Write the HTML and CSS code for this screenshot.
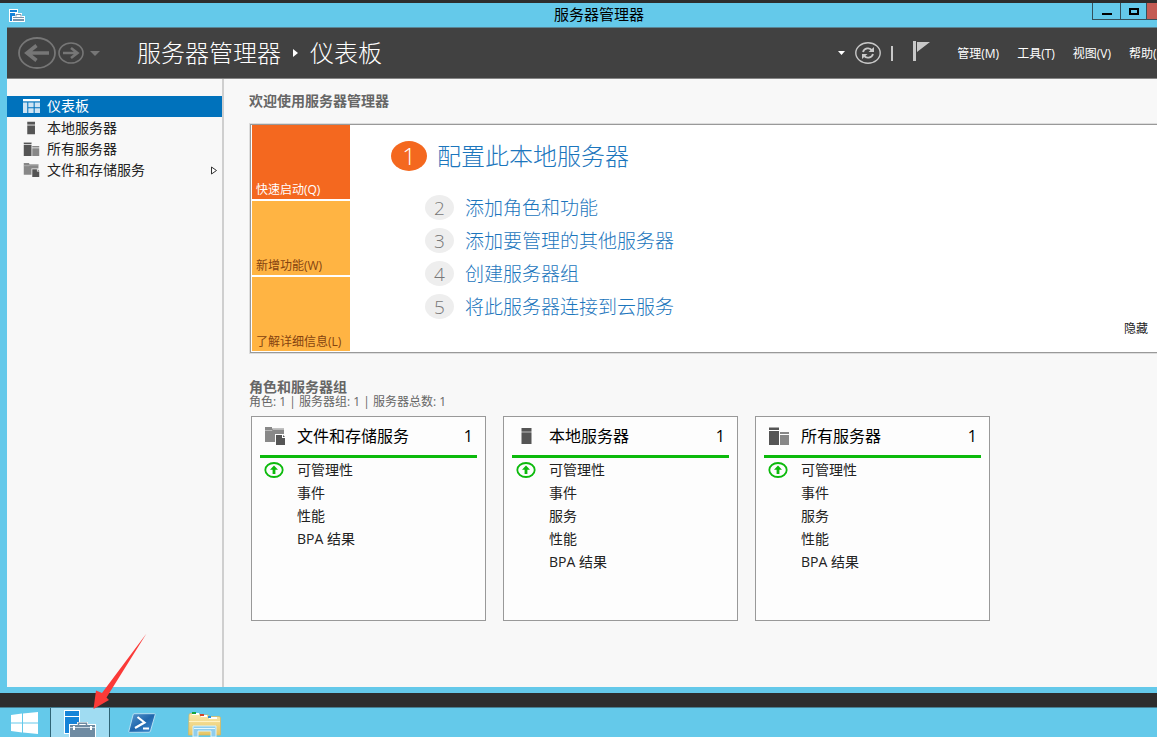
FILE: index.html
```html
<!DOCTYPE html>
<html lang="zh-CN">
<head>
<meta charset="utf-8">
<title>服务器管理器</title>
<link rel="stylesheet" href="styles.css">
</head>
<body>
<svg class="defs" aria-hidden="true">
  <symbol id="i-server" viewBox="0 0 22 18" preserveAspectRatio="none">
    <path fill="#555" d="M5.500 1h10v3h-10zM5.500 6h10v11h-10z"/><path fill="#888" d="M5.500 4h10v2h-10z"/>
  </symbol>
  <symbol id="i-servers" viewBox="0 0 22 18" preserveAspectRatio="none">
    <path fill="#555" d="M1 1h10v2H1zM1 4h10v14H1z"/><path fill="#888" d="M12 5h9v2h-9zM12 8h9v10h-9z"/><path fill="#aaa" d="M1 0h10v1H1z"/>
  </symbol>
  <symbol id="i-files" viewBox="0 0 22 18" preserveAspectRatio="none">
    <path fill="#888" d="M1 0h7v1.500h12V7h-9v8H1z"/><path stroke="#c4c4c4" stroke-width=".8" d="M1 3.500h7l1-1h11" fill="none"/><path fill="#555" d="M12 8h6v3h3v7h-9z"/><path fill="#555" d="M19 8l2 2h-2z"/>
  </symbol>
  <symbol id="i-up" viewBox="0 0 20 16" preserveAspectRatio="none">
    <ellipse cx="10" cy="8" rx="8.7" ry="7" fill="none" stroke="#0cba0c" stroke-width="1.8"/>
    <path fill="#0cba0c" d="M10 3.5l4 4.2h-2.6V12H8.600V7.700H6z"/>
  </symbol>
</svg>
<div class="desktop">
  <div class="window">
    <div class="titlebar">
      <svg class="app-icon" viewBox="0 0 16 13"><path fill="#fff" d="M0 0h9v13H0z"/><path fill="#1683d8" d="M1 1h7v2H1zM1 4h7v8H1z"/><path fill="#fff" d="M3 7h3V4h7v3h3v6H3z"/><path fill="#7894ab" d="M4 8h11v4H4z"/><path fill="none" stroke="#7894ab" d="M7 7.500v-2h5v2"/><path stroke="#fff" d="M4 9.500h11"/></svg>
      <h1 class="title">服务器管理器</h1>
      <div class="controls">
        <button class="control" aria-label="最小化"><svg width="10" height="7"><path d="M0 5h10v2H0z"/></svg></button>
        <button class="control control-max" aria-label="最大化"><svg width="10" height="7"><path d="M1 1h8v5H1z" fill="none" stroke="#000" stroke-width="2"/></svg></button>
        <button class="control control-close" aria-label="关闭"></button>
      </div>
    </div>
    <header class="header">
      <div class="history">
        <button class="plain" aria-label="后退"><svg width="38" height="32" viewBox="0 0 38 32"><ellipse cx="19" cy="16" rx="18" ry="15" fill="none" stroke="#767676" stroke-width="1.800"/><path d="M31 16H10M18.500 8.500L9 16l9.500 7.500" fill="none" stroke="#767676" stroke-width="3.600"/></svg></button>
        <button class="plain" aria-label="前进"><svg width="26" height="22" viewBox="0 0 26 22"><ellipse cx="13" cy="11" rx="12" ry="10" fill="none" stroke="#767676" stroke-width="1.600"/><path d="M5 11h14M13 6l6.500 5L13 16" fill="none" stroke="#767676" stroke-width="2.600"/></svg></button>
        <button class="plain recent" aria-label="历史记录"><svg width="10" height="5"><path d="M0 0h10L5 5z" fill="#767676"/></svg></button>
      </div>
      <nav class="crumbs"><span>服务器管理器</span><svg width="5" height="8"><path d="M0 0l5 4-5 4z" fill="#fff"/></svg><span>仪表板</span></nav>
      <div class="tools">
        <button class="plain" aria-label="更多"><svg width="7" height="4"><path d="M0 0h7L3.500 4z" fill="#fff"/></svg></button>
        <button class="plain" aria-label="刷新"><svg width="26" height="22" viewBox="0 0 26 22"><ellipse cx="13" cy="11" rx="12.200" ry="10.200" fill="none" stroke="#c8c8c8" stroke-width="1.400"/><path d="M8 10c1-4 7-5 9-1.500M18 12c-1 4-7 5-9 1.500" fill="none" stroke="#c8c8c8" stroke-width="1.800"/><path d="M19 5v5h-5.500zM7 17v-5h5.500z" fill="#c8c8c8"/></svg></button>
        <span class="divider"></span>
        <button class="plain flag" aria-label="通知"><svg width="17" height="20"><path d="M0 0h3v20H0zM4 1h13L4 11z" fill="#c8c8c8"/></svg></button>
        <nav class="menu">
          <button class="plain">管理(M)</button><button class="plain">工具(T)</button><button class="plain">视图(V)</button><button class="plain">帮助(H)</button>
        </nav>
      </div>
    </header>
    <div class="body">
      <nav class="sidebar">
        <a class="item selected" href="#"><svg class="item-icon" viewBox="0 0 16 12" preserveAspectRatio="none"><path fill="#fff" d="M0 0h16v2H0z"/><path fill="#cfe4f3" d="M0 3h4v9H0zM5 3h5v4H5zM11 3h5v4h-5zM5 8h5v4H5zM11 8h5v4h-5z"/></svg>仪表板</a>
        <a class="item" href="#"><svg class="item-icon"><use href="#i-server"/></svg>本地服务器</a>
        <a class="item" href="#"><svg class="item-icon"><use href="#i-servers"/></svg>所有服务器</a>
        <a class="item" href="#"><svg class="item-icon"><use href="#i-files"/></svg>文件和存储服务<svg class="expand" width="6" height="9"><path d="M.5 1v7l5-3.500z" fill="#fff" stroke="#333"/></svg></a>
      </nav>
      <main class="main">
        <h2 class="heading">欢迎使用服务器管理器</h2>
        <section class="welcome">
          <div class="tiles">
            <button class="tile tile-active">快速启动(Q)</button>
            <button class="tile">新增功能(W)</button>
            <button class="tile">了解详细信息(L)</button>
          </div>
          <div class="steps">
            <a class="step step-first" href="#"><span class="num">1</span>配置此本地服务器</a>
            <a class="step" href="#"><span class="num">2</span>添加角色和功能</a>
            <a class="step" href="#"><span class="num">3</span>添加要管理的其他服务器</a>
            <a class="step" href="#"><span class="num">4</span>创建服务器组</a>
            <a class="step" href="#"><span class="num">5</span>将此服务器连接到云服务</a>
          </div>
          <button class="plain hide">隐藏</button>
        </section>
        <h2 class="heading heading-groups">角色和服务器组</h2>
        <p class="summary">角色: 1 | 服务器组: 1 | 服务器总数: 1</p>
        <div class="cards">
          <section class="card">
            <h3 class="card-head"><svg class="card-icon"><use href="#i-files"/></svg><span>文件和存储服务</span><span class="count">1</span></h3>
            <ul class="rows"><li class="ok"><svg class="up"><use href="#i-up"/></svg>可管理性</li><li>事件</li><li>性能</li><li>BPA 结果</li></ul>
          </section>
          <section class="card">
            <h3 class="card-head"><svg class="card-icon"><use href="#i-server"/></svg><span>本地服务器</span><span class="count">1</span></h3>
            <ul class="rows"><li class="ok"><svg class="up"><use href="#i-up"/></svg>可管理性</li><li>事件</li><li>服务</li><li>性能</li><li>BPA 结果</li></ul>
          </section>
          <section class="card">
            <h3 class="card-head"><svg class="card-icon"><use href="#i-servers"/></svg><span>所有服务器</span><span class="count">1</span></h3>
            <ul class="rows"><li class="ok"><svg class="up"><use href="#i-up"/></svg>可管理性</li><li>事件</li><li>服务</li><li>性能</li><li>BPA 结果</li></ul>
          </section>
        </div>
      </main>
    </div>
  </div>
</div>
<footer class="taskbar">
  <button class="task task-start" aria-label="开始"><svg width="28" height="22" viewBox="0 0 28 22"><path fill="#fff" d="M0 3l11-1.500v9H0zM12 1.400L27 0v10.500H12zM0 11.500h11v9L0 19zM12 11.500h15V22l-15-1.400z"/></svg></button>
  <button class="task task-active" aria-label="服务器管理器"><svg width="32" height="27" viewBox="0 0 32 27"><path fill="#fff" d="M0 0h16v24H0z"/><path fill="#1683d8" d="M1 1h14v5H1zM1 7h14v16H1z"/><path fill="#fff" d="M5 14h8v-2h11v2h8v13H5z"/><path fill="#6f8ba2" d="M6 15h25v12H6z"/><path fill="none" stroke="#6f8ba2" stroke-width="1.500" d="M14.500 15v-1.800h8V15"/><path stroke="#c9d8e3" d="M6 17.500h25"/><path fill="#fff" d="M9 16h2v4H9zM26 16h2v4h-2z"/></svg></button>
  <button class="task task-shell" aria-label="PowerShell"><svg width="28" height="20" viewBox="0 0 28 20"><defs><linearGradient id="ps" x1="0" y1="0" x2="1" y2="1"><stop offset="0" stop-color="#5c9bd0"/><stop offset=".5" stop-color="#2067ad"/><stop offset="1" stop-color="#4591d5"/></linearGradient></defs><path d="M6 .7h20.500q1 0 .7 1L22.500 18q-.4 1.300-1.500 1.300H1.500q-1 0-.7-1L5 2Q5.200.7 6 .7z" fill="url(#ps)" stroke="#b5dff2"/><path d="M9.500 4l7 5.500-9.500 5.500M15 15.500h6" fill="none" stroke="#fff" stroke-width="2.200"/></svg></button>
  <button class="task" aria-label="文件资源管理器"><svg width="33" height="25" viewBox="0 0 33 25"><defs><linearGradient id="fo" x1="0" y1="0" x2="0" y2="1"><stop offset="0" stop-color="#fbe9ad"/><stop offset="1" stop-color="#e6c563"/></linearGradient></defs><path d="M1 3q0-1.500 1.500-1.500H11l1.500 1.500H20l1.500 1.500H31q1.500 0 1.500 1.500v17H.5z" fill="url(#fo)" stroke="#d9b65a" stroke-width=".7"/><path fill="#fff" d="M4 1h7v2H4zM13 3h6v2h-6zM21 5h8v2h-8z"/><path fill="#18a53a" d="M4 0h4v2H4z"/><path fill="#d54427" d="M12 2h4v2h-4z"/><path fill="#2c91d7" d="M20 4h3v2h-3z"/><path d="M1 9.500h31" stroke="#fff3c4"/><path d="M5 14h23v11h-5v-6H10v6H5z" fill="#8fcdec" stroke="#d6f2fd"/><path d="M6 16.500h21" stroke="#e5f8ff"/></svg></button>
</footer>
<svg class="pointer" width="56" height="78" viewBox="0 0 56 78" aria-hidden="true"><path fill="#fb3a38" d="M53.500.5L13.500 64.500 16 67 .5 76 3 57.500 9 60z"/></svg>
</body>
</html>
```

FILE: styles.css
```css
* { box-sizing: border-box; }

body {
  margin: 0;
  height: 100vh;
  display: flex;
  flex-direction: column;
  overflow: hidden;
  background: #2d2d2d;
  color: #222;
  font: 14px/20px "Open Sans", "Noto Sans CJK SC", sans-serif;
}

svg { display: block; flex: none; }
h1, h2, h3, p, ul { margin: 0; padding: 0; font-weight: 400; }
button { margin: 0; padding: 0; border: 0; background: none; color: inherit; font: inherit; }
a { color: inherit; text-decoration: none; }
.defs { position: absolute; width: 0; height: 0; }

.desktop { flex: 1; min-height: 0; display: flex; padding: 3px 0 14px; overflow: hidden; }

/* The window runs past the right edge of the screen. */
.window {
  flex: none;
  width: calc(100% + 41px);
  display: flex;
  flex-direction: column;
  padding: 0 7px 6px;
  background: #64c9ea;
}

.titlebar { display: grid; grid-template-columns: 1fr auto 1fr; height: 25px; align-items: center; border-bottom: 1px solid #5a8494; }
.app-icon { width: 16px; height: 13px; margin-left: 2px; }
.title { color: #000; font-size: 15px; line-height: 22px; padding-bottom: 2px; }
.controls { display: flex; align-self: start; justify-self: end; height: 17px; border: 1px solid #34505b; border-top: 0; }
.control { width: 28px; display: flex; align-items: center; justify-content: center; border-right: 1px solid #34505b; }
.control-max { width: 26px; }
.control-close { width: 43px; border: 0; background: #c35b53; }

.header { display: flex; align-items: center; height: 51px; padding: 0 22px 0 11px; background: #414141; color: #fff; border-bottom: 1px solid #858585; }
.history { display: flex; align-items: center; gap: 2px; width: 119px; }
.recent { margin-left: 4px; }
.crumbs { display: flex; align-items: center; gap: 12px; font-size: 24px; font-weight: 300; }
.tools { display: flex; align-items: center; margin-left: auto; gap: 10px; }
.divider { width: 2px; height: 15px; background: #c8c8c8; }
.flag { margin: 0 17px 4px 10px; }
.menu { display: flex; gap: 18px; padding-top: 2px; font-size: 12px; }

.body { flex: 1; min-height: 0; display: flex; background: #f8f8f8; }
.sidebar { width: 217px; padding-top: 17px; border-right: 2px solid #cfcfcf; }
.item { display: flex; align-items: center; gap: 7px; height: 21px; margin-bottom: 1px; padding: 0 5px 1px 16px; }
.item + .item { margin-bottom: 0; }
.item-icon { width: 17px; height: 14px; }
.selected { background: #0072bc; color: #fff; }
.expand { margin-left: auto; }

.main { flex: 1; padding: 12px 0 0 25px; overflow: hidden; }
.heading { color: #666; font-weight: 700; font-size: 14px; line-height: 20px; }
.welcome { position: relative; display: flex; margin: 13px 0 25px 1px; padding: 0 1px 1px; background: #fff; border: 2px solid #999; border-width: 1px 2px 1px 1px; outline: 1px solid #ddd; }
.tiles { display: flex; flex-direction: column; gap: 2px; width: 98px; }
.tile { display: flex; align-items: flex-end; height: 74px; padding-left: 4px; background: #ffb443; color: #844310; font-size: 12px; line-height: 18px; }
.tile-active { background: #f4681f; color: #fff; }
.steps { display: flex; flex-direction: column; align-items: flex-start; padding: 14px 0 0 75px; }
.step { display: flex; align-items: center; gap: 11px; height: 33px; color: #1c76bd; font-size: 19px; font-weight: 300; }
.num { display: flex; align-items: center; justify-content: center; width: 29px; height: 25px; border-radius: 50%; background: #eee; color: #777; }
.step-first { height: 34px; margin: 0 0 18px -34px; gap: 10px; font-size: 24px; }
.step-first .num { width: 36px; height: 30px; background: #f4681f; color: #fff; }
.hide { position: absolute; right: 41px; bottom: 13px; font-size: 12px; }

.heading-groups { line-height: 18px; }
.summary { color: #666; font-size: 12px; line-height: 12px; }
.cards { display: flex; gap: 17px; margin: 8px 0 0 2px; }
.card { width: 235px; height: 205px; padding: 3px 8px; background: #fdfdfd; border: 1px solid #999; }
.card-head { display: flex; align-items: center; height: 38px; padding: 0 4px 3px 4px; border-bottom: 3px solid #0cba0c; color: #000; font-size: 16px; }
.card-icon { width: 22px; height: 18px; margin-right: 11px; }
.count { margin-left: auto; }
.rows { list-style: none; padding-left: 37px; line-height: 23px; }
.ok { display: flex; align-items: center; gap: 13px; margin-left: -33px; }
.up { width: 20px; height: 16px; }

.taskbar { display: flex; height: 30px; background: #64c9ea; border-top: 1px solid #467f92; overflow: hidden; }
.task { display: flex; justify-content: center; align-items: flex-start; width: 62px; padding-top: 4px; }
.task-start { width: 50px; padding-top: 4px; }
.task-shell { width: 64px; padding-top: 5px; }
.task-shell + .task { width: 60px; }
.task-active { width: 60px; padding-top: 2px; background: #a0dcf2; border: 1px solid #2f6476; border-width: 0 1px; }

.pointer { position: absolute; left: 93px; bottom: 26px; }
```
